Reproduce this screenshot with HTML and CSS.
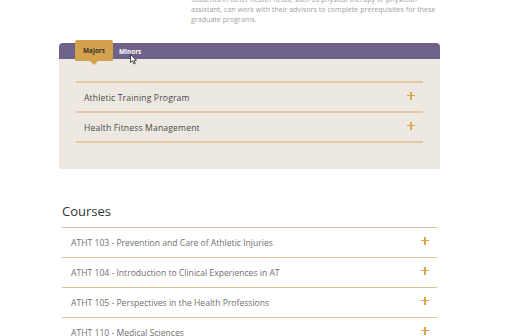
FILE: index.html
```html
<!DOCTYPE html>
<html>
<head lang="en">
  <meta charset="UTF-8">
  <title>Athletic Training</title>
  <link rel="stylesheet" href="styles.css">
</head>
<body>
<div class="page">
  <p class="intro">Students in other health fields, such as physical therapy or physician assistant, can work with their advisors to complete prerequisites for these graduate programs.</p>

  <div class="programs">
    <div class="tab-bar">
      <a href="javascript:void(0);" class="tab active">Majors</a>
      <a href="javascript:void(0);" class="tab">Minors</a>
    </div>
    <div class="tab-body">
      <ul class="acc">
        <li class="acc-row"><span>Athletic Training Program</span><i class="plus"></i></li>
        <li class="acc-row"><span>Health Fitness Management</span><i class="plus"></i></li>
      </ul>
    </div>
  </div>

  <h2 class="courses-title">Courses</h2>
  <ul class="courses">
    <li class="course-row"><span>ATHT 103 - Prevention and Care of Athletic Injuries</span><i class="plus"></i></li>
    <li class="course-row"><span>ATHT 104 - Introduction to Clinical Experiences in AT</span><i class="plus"></i></li>
    <li class="course-row"><span>ATHT 105 - Perspectives in the Health Professions</span><i class="plus"></i></li>
    <li class="course-row"><span>ATHT 110 - Medical Sciences</span><i class="plus"></i></li>
  </ul>
</div>

<svg class="cursor" width="8" height="11" viewBox="0 0 8 11">
  <path d="M0.5 0.5 L0.5 8.5 L2.5 6.8 L4 10 L5.3 9.4 L3.9 6.3 L6.5 6.3 Z" fill="#fff" stroke="#222" stroke-width="0.8"/>
</svg>
</body>
</html>
```

FILE: styles.css
```css
html, body {
  margin: 0;
  padding: 0;
  background: #ffffff;
  font-family: "Open Sans", "DejaVu Sans", sans-serif;
  overflow: hidden;
}

ul, li, p, h2, a {
  margin: 0;
  padding: 0;
  list-style: none;
}

a {
  text-decoration: none;
}

.page {
  width: 381px;
  margin-left: 59px;
}

.intro {
  margin: -5px 0 0 132px;
  width: 250px;
  font-size: 7px;
  letter-spacing: 0.05px;
  line-height: 10px;
  color: #a0a0a0;
}

/* tabs */
.programs {
  margin-top: 18px;
}

.tab-bar {
  display: flex;
  align-items: stretch;
  height: 16px;
  padding-left: 16px;
  background: #6e6289;
  border-radius: 4px 4px 0 0;
}

.tab {
  display: flex;
  align-items: center;
  padding: 0 6px;
  font-size: 6.4px;
  font-weight: 700;
  color: #ffffff;
}

.tab.active {
  position: relative;
  z-index: 2;
  margin: -3px 0 -2px 0;
  width: 38px;
  box-sizing: border-box;
  justify-content: center;
  padding: 0;
  background: #d4a24f;
  color: #3a3226;
  border-radius: 2px 2px 0 0;
}

.tab.active::after {
  content: "";
  position: absolute;
  left: 50%;
  bottom: -4px;
  margin-left: -4px;
  border-left: 4px solid transparent;
  border-right: 4px solid transparent;
  border-top: 4px solid #d4a24f;
}

.tab-body {
  height: 110px;
  box-sizing: border-box;
  padding: 22px 17px 0 17px;
  background: #ede8e2;
}

.acc {
  border-top: 2px solid #dfc9a6;
}

.acc-row {
  display: flex;
  align-items: center;
  justify-content: space-between;
  box-sizing: border-box;
  height: 30px;
  padding: 1px 8px 0 8px;
  border-bottom: 2px solid #dfc9a6;
  font-size: 8.6px;
  letter-spacing: 0.15px;
  color: #4a4a4a;
}

/* courses */
.courses-title {
  margin: 33px 0 0 3px;
  font-size: 13px;
  font-weight: 400;
  color: #333333;
}

.courses {
  margin: 7px 3px 0 3px;
  border-top: 1px solid #ddc096;
}

.course-row {
  display: flex;
  align-items: center;
  justify-content: space-between;
  height: 29px;
  padding: 0 8px 0 9px;
  border-bottom: 1px solid #ddc096;
  font-size: 8.6px;
  color: #707070;
}

.plus {
  position: relative;
  width: 8px;
  height: 8px;
  margin-top: -4px;
}

.plus::before,
.plus::after {
  content: "";
  position: absolute;
  background: #dca54a;
}

.plus::before {
  left: 0;
  top: 3.25px;
  width: 8px;
  height: 1.5px;
}

.plus::after {
  left: 3.25px;
  top: 0;
  width: 1.5px;
  height: 8px;
}

.cursor {
  position: absolute;
  left: 130px;
  top: 54px;
}
```
